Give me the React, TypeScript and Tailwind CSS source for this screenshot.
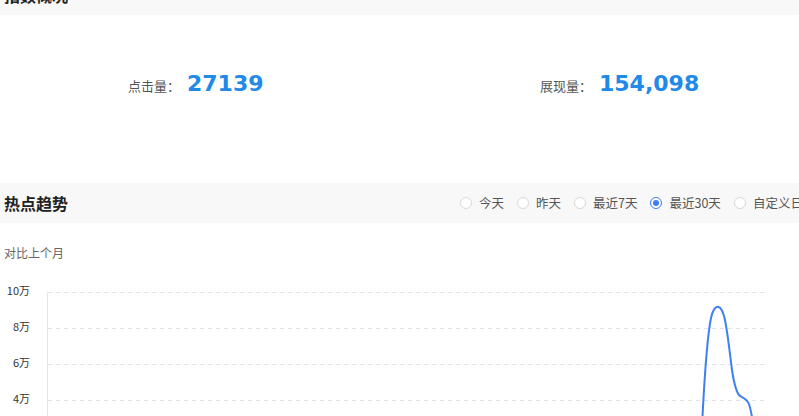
import React from 'react';

const ranges = [
  { label: '今天', checked: false },
  { label: '昨天', checked: false },
  { label: '最近7天', checked: false },
  { label: '最近30天', checked: true },
  { label: '自定义日期', checked: false },
];

const yTicks = [
  { label: '10万', y: 12.5 },
  { label: '8万', y: 48.5 },
  { label: '6万', y: 84.5 },
  { label: '4万', y: 120.5 },
];

function Radio({ label, checked }: { label: string; checked: boolean }) {
  return (
    <label className="flex items-center gap-[7px] whitespace-nowrap text-[12.5px] text-[#555]">
      <span
        className={
          checked
            ? 'w-3 h-3 rounded-full border border-[#3f7ff0] flex items-center justify-center bg-white'
            : 'w-3 h-3 rounded-full border border-[#d9d9d9] bg-white'
        }
      >
        {checked && <span className="w-[6px] h-[6px] rounded-full bg-[#3f7ff0]" />}
      </span>
      {label}
    </label>
  );
}

function Stat({ label, value }: { label: string; value: string }) {
  return (
    <div className="flex items-baseline">
      <span className="w-[52px] text-[13px] text-[#555] whitespace-nowrap">{label}</span>
      <span className="ml-[7px] text-[22px] leading-8 font-bold text-[#2189e8] font-['DejaVu_Sans',sans-serif]">
        {value}
      </span>
    </div>
  );
}

export default function App() {
  return (
    <div className="w-[799px] h-[416px] overflow-hidden bg-white font-['Noto_Sans_CJK_SC',sans-serif]">
      <div className="w-[860px] -mt-[25px]">
        {/* 指数概况 */}
        <div className="h-10 bg-[#f8f8f8] flex items-center pl-1">
          <h2 className="text-base font-bold text-[#222]">指数概况</h2>
        </div>
        <div className="h-[168px] pt-[53px] flex">
          <div className="w-[540px] pl-[128px]">
            <Stat label="点击量：" value="27139" />
          </div>
          <div>
            <Stat label="展现量：" value="154,098" />
          </div>
        </div>

        {/* 热点趋势 */}
        <div className="h-10 bg-[#f8f8f8] flex items-center">
          <h2 className="w-[460px] pl-1 text-base font-bold text-[#222]">热点趋势</h2>
          <div className="flex items-center gap-[13px]">
            {ranges.map((r) => (
              <Radio key={r.label} label={r.label} checked={r.checked} />
            ))}
          </div>
        </div>
        <p className="pt-[21px] pl-1 text-xs leading-[18px] text-[#666]">对比上个月</p>

        <svg width="799" height="140" className="mt-[18px] block">
          <line x1="47.5" y1="12.5" x2="47.5" y2="140" stroke="#e6e6e6" />
          {yTicks.map((t) => (
            <g key={t.label}>
              <line x1="48" y1={t.y} x2="764" y2={t.y} stroke="#e3e3e3" strokeDasharray="4 4" />
              <text x="30" y={t.y} textAnchor="end" dominantBaseline="middle" fontSize="11" fill="#333">
                {t.label}
              </text>
            </g>
          ))}
          <path
            d="M702,145 C704,110 706,62 711,38 C713,29 715,26.5 718,26.7 C721,27 723,31 725,40 C728,55 730,75 732,90 C734,103 736,113 740,116 C744,118 747,119 749,124 C751,130 752,136 753,145"
            fill="none"
            stroke="#3f7ff0"
            strokeWidth="2"
          />
        </svg>
      </div>
    </div>
  );
}
